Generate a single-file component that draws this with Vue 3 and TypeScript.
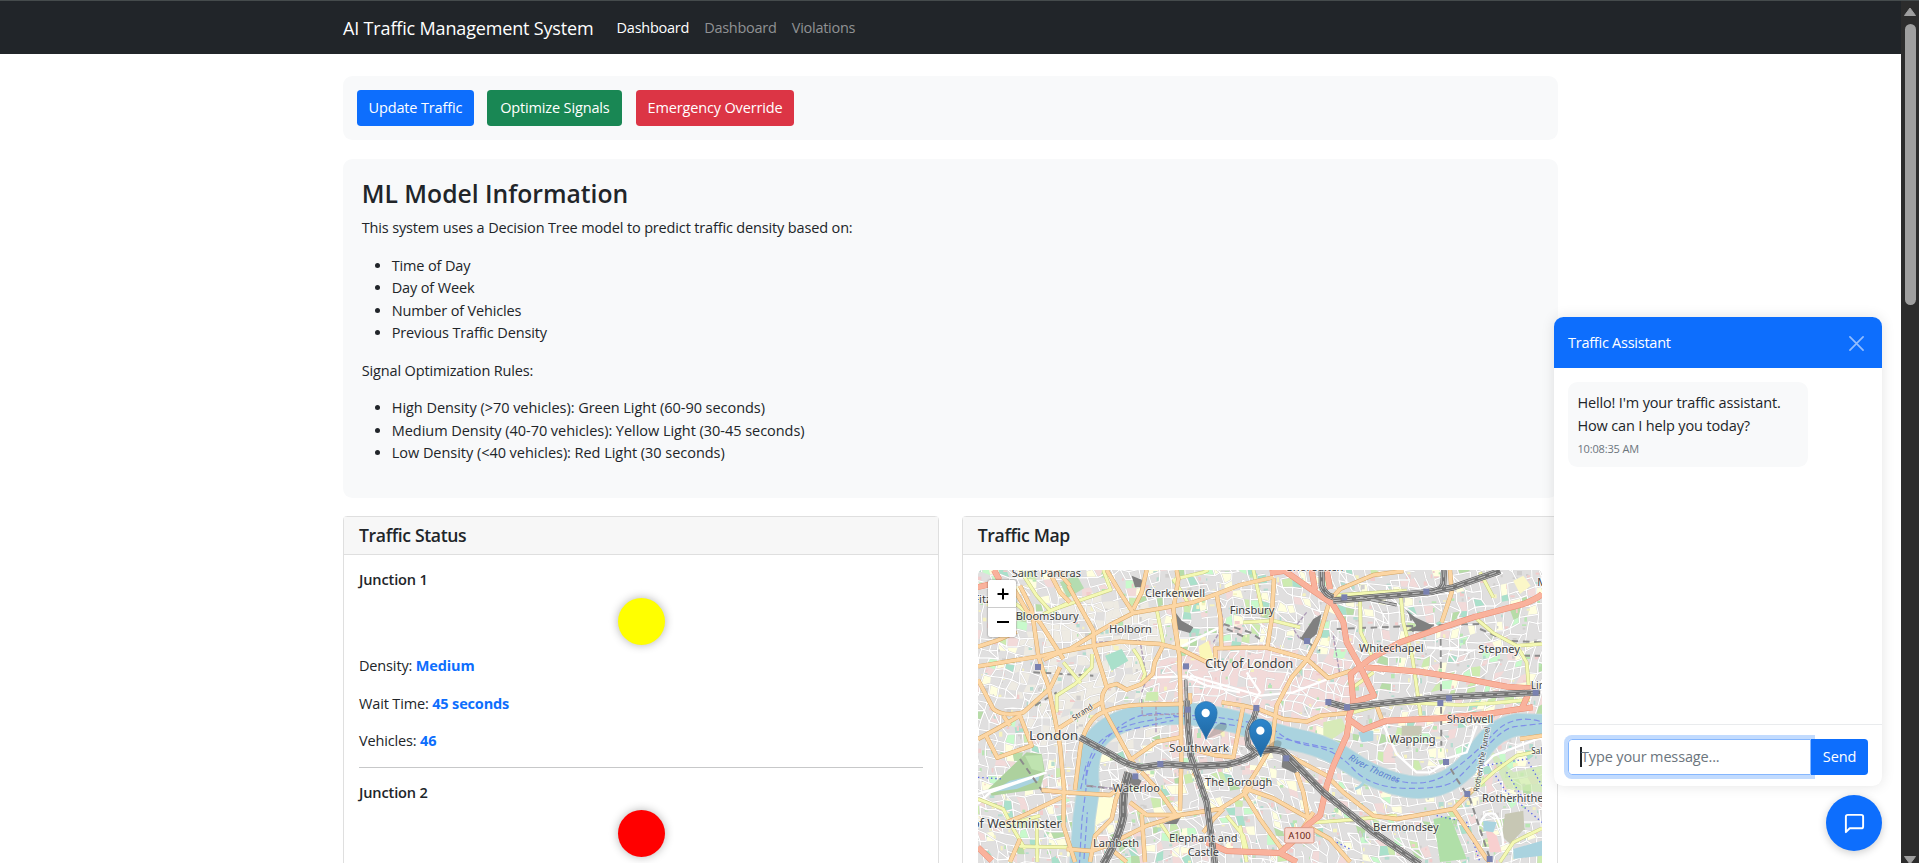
<script setup lang="ts">
interface Detail {
  label: string
  value: string
}
interface Junction {
  name: string
  signal: string
  details: Detail[]
}
interface Label {
  text: string
  x: number
  y: number
  w: number
  big?: boolean
}

const factors: string[] = ['Time of Day', 'Day of Week', 'Number of Vehicles', 'Previous Traffic Density']
const rules: string[] = [
  'High Density (>70 vehicles): Green Light (60-90 seconds)',
  'Medium Density (40-70 vehicles): Yellow Light (30-45 seconds)',
  'Low Density (<40 vehicles): Red Light (30 seconds)',
]
const junctions: Junction[] = [
  {
    name: 'Junction 1',
    signal: 'yellow',
    details: [
      { label: 'Density:', value: 'Medium' },
      { label: 'Wait Time:', value: '45 seconds' },
      { label: 'Vehicles:', value: '46' },
    ],
  },
  { name: 'Junction 2', signal: 'red', details: [] },
]

// Deterministic generator so the side streets are stable between renders.
let seed = 1234567
const rnd = (): number => {
  seed = (seed * 1103515245 + 12345) % 2147483648
  return seed / 2147483648
}

// Side streets: a jittered lattice whose direction drifts across the map.
const step = 26
const cols = 70
const rows = 38
const nodes: number[][][] = []
for (let r = 0; r < rows; r++) {
  const line: number[][] = []
  for (let c = 0; c < cols; c++) {
    const bx = 10 + c * step
    const by = r * step
    line.push([
      Math.round(bx + 34 * Math.sin(by / 120) + (rnd() - 0.5) * 13),
      Math.round(by + 36 * Math.sin(bx / 170) + (rnd() - 0.5) * 13),
    ])
  }
  nodes.push(line)
}
let streetPath = ''
const blocks: { d: string; fill: string }[] = []
const greens = ['#cdebb0', '#c8facc', '#b7dca8', '#aae0cb']
const inEllipse = (p: number[], x: number, y: number, rx: number, ry: number): boolean =>
  Math.hypot((p[0] - x) / rx, (p[1] - y) / ry) < 1
for (let r = 0; r < rows - 1; r++) {
  for (let c = 0; c < cols - 1; c++) {
    const a = nodes[r][c]
    const b = nodes[r][c + 1]
    const e = nodes[r + 1][c]
    const f = nodes[r + 1][c + 1]
    if (rnd() < 0.66) streetPath += `M${a[0]} ${a[1]}L${b[0]} ${b[1]}`
    if (rnd() < 0.66) streetPath += `M${a[0]} ${a[1]}L${e[0]} ${e[1]}`
    if (rnd() < 0.08) streetPath += `M${a[0]} ${a[1]}L${f[0]} ${f[1]}`
    const k = rnd()
    let fill = ''
    if (inEllipse(a, 870, 370, 340, 125) && k < 0.85) fill = '#f2dad9'
    else if (inEllipse(a, 400, 340, 260, 240) && k < 0.6) fill = '#eeebe3'
    else if (inEllipse(a, 760, 540, 160, 60) && k < 0.6) fill = '#f2dad9'
    else if (k < 0.08) fill = '#f2dad9'
    else if (k < 0.17) fill = '#ffffe0'
    else if (k < 0.3) fill = greens[Math.floor(rnd() * 4)]
    if (fill) blocks.push({ d: `M${a[0]} ${a[1]}L${b[0]} ${b[1]}L${f[0]} ${f[1]}L${e[0]} ${e[1]}Z`, fill })
  }
}
const specks: { x: number; y: number; w: number; h: number; fill: string }[] = []
for (let i = 0; i < 1100; i++) {
  specks.push({
    x: Math.round(54 + rnd() * 1690),
    y: Math.round(33 + rnd() * 876),
    w: Math.round(4 + rnd() * 11),
    h: Math.round(4 + rnd() * 11),
    fill: ['#b9e6b4', '#f6f3c0', '#d0cecd', '#f2cccb', '#b5dcd0'][Math.floor(rnd() * 5)],
  })
}

const river =
  'M362 920L372 780L385 690Q375 590 410 540Q450 490 540 472Q600 462 660 463Q740 466 840 492Q940 530 1040 550Q1110 568 1170 610Q1250 665 1340 682Q1420 695 1480 655Q1530 620 1570 560Q1610 508 1670 497L1760 500'
const ferry =
  'M358 920L366 780L378 690Q372 600 420 548Q470 502 560 486T700 470T840 485T960 525T1060 562T1180 630T1340 688T1480 668T1570 575T1670 502L1760 492M372 900L382 760M362 690L380 610M380 650Q390 580 470 510T660 475M470 520L640 484M700 480L860 505M950 535L1120 570M1300 662Q1400 690 1470 640T1600 525T1750 490'

const yellow: string[] = [
  'M180 33L230 110L270 155L400 110L452 92L430 33',
  'M250 165L330 130M150 120L205 165',
  'M290 460L290 410L345 375L395 325L397 285M310 310L362 372',
  'M590 150L610 252M645 60L730 40L745 33M520 270L540 300L555 345L545 370M640 60L690 140',
  'M54 720L130 750L160 810L195 870M180 862L330 865M230 780L232 909M135 800L240 770',
  'M880 33L895 100L910 170M850 190L940 185L1020 205',
  'M1200 110L1202 220L1240 300M1320 90L1330 190L1358 300L1382 470',
  'M1180 460L1270 435L1370 432L1500 438L1600 432L1710 422',
  'M1560 40L1600 115M1550 180L1600 222L1670 260L1746 255M1670 260L1700 310L1706 380',
  'M1040 792L1140 785L1310 770M1746 575L1670 590L1600 640L1520 712',
  'M1746 808L1700 830L1660 850L1620 909M1180 385L1240 340M1110 110L1340 95',
  'M800 770L850 830L860 870M840 800L860 909M600 790L640 850',
]
const orange: string[] = [
  'M54 322L250 290L330 270L395 230L450 198L520 162L620 145L700 130L770 105L840 78L940 55',
  'M54 263L110 245L170 218M250 302L300 280L390 262L480 248L600 255L660 270L745 312',
  'M150 70L200 155L240 190L310 300M180 80L215 150L235 290L250 340L268 390',
  'M325 80L400 215L402 262L430 350L440 385Q418 410 430 450L512 600L540 640',
  'M330 130L300 100L265 33M440 33L480 100L520 162M520 150L545 100L560 33',
  'M440 383L470 375L500 392L545 375L578 345L584 310L608 262',
  'M290 512L335 483L425 430M345 692L358 590Q365 510 410 470Q460 438 560 437L660 435',
  'M54 362L100 450Q130 475 190 460L270 388L300 325',
  'M54 540L110 510L180 470L215 560L112 596L78 530M130 470L150 500',
  'M266 388L285 480L300 560L312 690L310 800L345 909',
  'M245 693L310 700L450 708L475 690M305 715L200 765L130 795M320 870L395 876',
  'M515 600L590 548L662 535M640 180L658 290L662 420L664 600L660 755',
  'M662 435L690 430L690 403M850 440L820 595L762 588L702 572M785 430L850 440L900 452L970 480L1040 488L1080 470L1165 462',
  'M505 640L468 720L455 780L405 830L390 909M545 640L600 700L650 770',
  'M510 730L560 768L660 768L780 750L860 700L880 670M480 840L560 800L660 770M545 765L555 909M730 820L760 780L790 750',
  'M650 33L655 60L640 150L655 270M770 105L782 180L784 268M770 320L765 268L840 266L920 266L1040 300L1105 357L1175 335',
  'M942 58L935 180L922 265M1105 138L1078 230L1042 300L995 355L950 440L935 560L900 620L850 700',
  'M1105 130L1140 90L1240 48L1330 36M1470 33L1475 100L1445 190',
  'M905 560L960 575L1100 650L1150 700L1240 770L1310 780L1480 750L1540 690M1480 750L1580 900L1590 909',
  'M860 690L940 718L1050 780M1010 640L1030 700L1045 782M850 700L900 780L965 870L1000 850L1060 760',
  'M1250 440L1265 480M1680 540L1746 530M1040 800L1110 840L1170 909',
  'M180 840L150 909M395 876L440 860L500 909M700 650L720 620M330 80L290 33',
]
const red: string[] = [
  'M970 33L1055 92L1118 135L1150 190L1160 250L1200 322L1242 410L1180 430M1055 33L1065 92',
  'M1100 33L1110 90M930 42L970 36',
  'M1746 105Q1730 120 1690 135L1540 175L1440 208L1320 250L1230 300L1172 345L1180 430L1165 480L1210 512L1280 485L1440 478L1580 465L1680 450L1718 445',
  'M1215 325L1380 338L1520 360L1640 383L1712 388L1685 450',
  'M1168 482L1160 530L1120 620L1100 680L1080 770L1040 800L990 855L960 882',
  'M740 850L800 876L960 882L1010 909M54 865L95 905M50 85L125 68M102 33L118 62',
]
const rail: { d: string; w: number }[] = [
  { d: 'M360 535L460 590Q500 618 545 625L620 615L700 622L800 617Q860 605 890 580Q930 565 970 578L1090 700L1240 820L1380 915', w: 20 },
  { d: 'M680 425L684 500L692 590L740 730L765 915', w: 19 },
  { d: 'M677 362L680 430', w: 10 },
  { d: 'M505 640Q486 700 490 770Q480 830 430 915', w: 24 },
  { d: 'M890 450L880 480Q855 520 865 560L895 585', w: 17 },
  { d: 'M1105 430L1160 445L1290 430L1440 415L1740 400', w: 19 },
  { d: 'M1120 125L1180 120L1400 100L1480 85L1620 36', w: 19 },
  { d: 'M1085 33L1085 80Q1095 108 1120 115M1452 33L1450 75Q1440 100 1400 100', w: 18 },
  { d: 'M1200 115L1310 138', w: 9 },
]
const yards: string[] = [
  'M1060 180L1085 165L1070 225L1040 250L1022 238Z',
  'M500 640L545 665L535 685L490 670Z',
  'M628 135L665 185L700 205L690 222L655 212Z',
  'M515 50L545 62L550 85L525 85Z',
  'M1335 150L1365 175L1420 200L1400 218L1340 215L1370 200Z',
  'M610 795L665 770L650 795Z',
  'M970 570L1010 600L1010 645L965 625Z',
]
const tunnels =
  'M790 195L870 220L900 240M800 210L850 232M1020 235L1080 275M1130 210L1380 200L1560 195M1442 240L1444 560M1455 600L1490 660L1530 720L1590 900M1560 210L1640 245L1746 250M220 340L400 350M225 440L290 400M1350 165L1360 220M180 600L250 700M380 680L470 690M1690 290L1740 290'
const stations: number[][] = [
  [234, 324], [678, 322], [684, 452], [889, 447], [601, 615], [526, 652], [1041, 246], [1153, 115], [1399, 98],
  [1105, 429], [1161, 445], [1441, 432], [1467, 418], [1727, 401], [979, 598], [1458, 609], [1522, 705], [1589, 900],
]
const labels: Label[] = [
  { text: 'Saint Pancras', x: 155, y: 55, w: 208 },
  { text: 'Fitzrovia', x: 40, y: 132, w: 130 },
  { text: 'Bloomsbury', x: 167, y: 184, w: 189 },
  { text: 'Clerkenwell', x: 555, y: 113, w: 180 },
  { text: 'Holborn', x: 447, y: 222, w: 129 },
  { text: 'Finsbury', x: 809, y: 165, w: 134 },
  { text: 'Shoreditch', x: 980, y: 37, w: 170 },
  { text: 'City of London', x: 735, y: 328, w: 265, big: true },
  { text: 'London', x: 207, y: 544, w: 148, big: true },
  { text: 'Southwark', x: 627, y: 578, w: 180 },
  { text: 'The Borough', x: 735, y: 680, w: 202 },
  { text: 'Waterloo', x: 458, y: 698, w: 142 },
  { text: 'Lambeth', x: 399, y: 865, w: 138 },
  { text: 'Elephant and', x: 627, y: 848, w: 206 },
  { text: 'Castle', x: 683, y: 892, w: 94 },
  { text: 'of Westminster', x: 36, y: 808, w: 269, big: true },
  { text: 'Whitechapel', x: 1197, y: 279, w: 194 },
  { text: 'Stepney', x: 1555, y: 281, w: 125 },
  { text: 'Shadwell', x: 1460, y: 491, w: 140 },
  { text: 'Wapping', x: 1288, y: 551, w: 139 },
  { text: 'Rotherhithe', x: 1566, y: 730, w: 184 },
  { text: 'Bermondsey', x: 1239, y: 817, w: 197 },
  { text: 'Limehouse', x: 1712, y: 389, w: 160 },
  { text: 'Mile End', x: 1732, y: 80, w: 130 },
]
const pins: number[][] = [
  [738, 541],
  [902, 594],
]
</script>

<template>
  <div class="page">
    <div class="view">
      <nav class="navbar">
        <div class="container nav-row">
          <a class="brand">AI Traffic Management System</a>
          <a class="nav-link active">Dashboard</a>
          <a class="nav-link">Dashboard</a>
          <a class="nav-link">Violations</a>
        </div>
      </nav>

      <main class="container">
        <section class="controls">
          <button class="btn primary">Update Traffic</button>
          <button class="btn success">Optimize Signals</button>
          <button class="btn danger">Emergency Override</button>
        </section>

        <section class="info">
          <h3>ML Model Information</h3>
          <p>This system uses a Decision Tree model to predict traffic density based on:</p>
          <ul>
            <li v-for="f in factors" :key="f">{{ f }}</li>
          </ul>
          <p>Signal Optimization Rules:</p>
          <ul class="rules">
            <li v-for="r in rules" :key="r">{{ r }}</li>
          </ul>
        </section>

        <div class="row">
          <section class="card">
            <header class="card-header">Traffic Status</header>
            <div class="card-body">
              <div v-for="j in junctions" :key="j.name" class="junction">
                <h6>{{ j.name }}</h6>
                <div class="signal" :class="j.signal"></div>
                <p v-for="d in j.details" :key="d.label">{{ d.label }} <b>{{ d.value }}</b></p>
                <hr />
              </div>
            </div>
          </section>

          <section class="card">
            <header class="card-header">Traffic Map</header>
            <div class="card-body">
              <div class="map">
                <svg class="tiles" viewBox="54 33 1692 879">
                  <defs>
                    <linearGradient id="pin" x1="0" y1="0" x2="0" y2="1">
                      <stop offset="0" stop-color="#2e87cd" />
                      <stop offset="1" stop-color="#2068a3" />
                    </linearGradient>
                  </defs>
                  <rect x="0" y="0" width="1800" height="1000" fill="#e0dfdf" />
                  <path v-for="(b, i) in blocks" :key="'b' + i" :d="b.d" :fill="b.fill" />
                  <rect v-for="(s, i) in specks" :key="'s' + i" :x="s.x" :y="s.y" :width="s.w" :height="s.h" :fill="s.fill" />
                  <path :d="streetPath" fill="none" stroke="#cbc9c9" stroke-width="5.4" />
                  <path :d="streetPath" fill="none" stroke="#fff" stroke-width="3.8" />

                  <path d="M85 690L200 580L245 585L255 640L240 690L95 710Z" fill="#add19e" />
                  <path d="M95 700L150 665L240 645L235 665L170 690Z" fill="#aad3df" />
                  <path d="M195 590L245 588L252 640L215 630Z" fill="#bfe3b0" />
                  <path d="M435 290L485 270L505 305L455 335Z" fill="#aae0cb" />
                  <path d="M300 70L350 48L372 88L322 118Z" fill="#b4dcb0" />
                  <path d="M716 262L745 245L762 300L720 300Z" fill="#fbf7b8" />
                  <path d="M560 400L595 398L595 425L555 425Z" fill="#cdebb0" />
                  <path d="M410 715L462 715L450 775L405 800Z" fill="#ffffd8" />
                  <path d="M1090 490L1145 478L1160 510L1110 545L1090 530Z" fill="#d7eab8" />
                  <path d="M1420 780L1470 770L1520 900L1440 909L1430 840Z" fill="#b0dfa8" />
                  <path d="M1635 765L1690 755L1693 810L1650 855L1625 830Z" fill="#c7c7b4" />
                  <path d="M1575 800L1610 830L1625 880L1590 880Z" fill="#f8cfcf" />
                  <path d="M1660 870L1746 845L1746 890L1660 900Z" fill="#aad3df" />
                  <path d="M1570 785L1610 790L1600 820L1570 815ZM1195 520L1240 515L1240 545L1205 550Z" fill="#aad3df" />
                  <path d="M1325 500L1385 500L1385 530L1325 530Z" fill="#c7c7b4" />
                  <path d="M1660 65L1690 50L1712 80L1680 105Z" fill="#fbf7c8" />
                  <path d="M1580 560L1660 640L1746 620L1746 700L1640 690Z" fill="#cdebb0" opacity=".7" />

                  <path :d="river" class="river-bank" />
                  <path :d="river" class="river" />
                  <path :d="ferry" class="ferry" />
                  <path d="M1185 690Q1215 680 1215 650L1250 640" fill="none" stroke="#aad3df" stroke-width="8" />

                  <path d="M1265 485L1285 530L1310 585L1370 640L1410 640L1452 615M1455 600L1520 580L1550 500M54 735L90 700L260 640L54 705M1560 800Q1570 755 1605 765Q1625 790 1630 860M1550 640L1600 590L1746 535M580 355L680 352L740 380L840 400M690 350L760 370L900 410L1000 400L1130 350M860 340L900 400L880 430M665 262L790 200M1442 240L1442 300M1400 265L1540 275" class="minor" />
                  <path :d="tunnels" class="tunnel" />
                  <path v-for="y in yards" :key="y" :d="y" fill="#808080" />
                  <path d="M1570 620L1700 600L1746 680M1600 640L1640 700L1746 790M1430 770L1520 790L1560 909M1130 850L1170 870M54 655L130 660M1640 640L1690 720" class="boundary" />
                  <path d="M545 420L547 470L690 462M588 440L588 520M400 250L540 245L560 360L545 400M780 130L790 200L760 250M1040 160L1000 210L1020 240M1120 230L1140 350M380 680L470 690" class="admin" />

                  <g fill="none" stroke-linejoin="round">
                    <path v-for="d in yellow" :key="d" :d="d" stroke="#c3c77c" stroke-width="11" />
                    <path v-for="d in yellow" :key="'f' + d" :d="d" stroke="#f4f9b4" stroke-width="8.5" />
                    <path v-for="d in orange" :key="d" :d="d" stroke="#d3a463" stroke-width="13" />
                    <path v-for="d in orange" :key="'f' + d" :d="d" stroke="#fcd6a4" stroke-width="10.5" />
                    <path v-for="d in red" :key="d" :d="d" stroke="#e98a70" stroke-width="18" />
                    <path v-for="d in red" :key="'f' + d" :d="d" stroke="#f9b29c" stroke-width="15.5" />
                    <path v-for="l in rail" :key="l.d" :d="l.d" stroke="#5f5f5f" :stroke-width="l.w" />
                    <path v-for="l in rail" :key="'a' + l.d" :d="l.d" stroke="#cfcfcf" :stroke-width="l.w - 4" />
                    <path v-for="l in rail" :key="'b' + l.d" :d="l.d" stroke="#747474" :stroke-width="l.w - 7.5" />
                    <path v-for="l in rail" :key="'c' + l.d" :d="l.d" stroke="#c4c4c4" stroke-width="3" stroke-dasharray="22 12" />
                  </g>

                  <rect v-for="(s, i) in stations" :key="'st' + i" :x="s[0] - 9" :y="s[1] - 9" width="18" height="18" fill="#7981b0" />

                  <g class="labels">
                    <text v-for="l in labels" :key="l.text" :x="l.x" :y="l.y" :textLength="l.w" lengthAdjust="spacingAndGlyphs" :font-size="l.big ? 38 : 32">{{ l.text }}</text>
                    <text x="0" y="0" transform="translate(343 485) rotate(-34)" textLength="68" lengthAdjust="spacingAndGlyphs" font-size="23">Strand</text>
                    <text x="0" y="0" transform="translate(1556 700) rotate(-80)" textLength="198" lengthAdjust="spacingAndGlyphs" font-size="24">Rotherhithe Tunnel</text>
                    <text x="1714" y="585" font-size="24">Salter Road</text>
                  </g>
                  <path id="thames" d="M1164 600Q1240 650 1340 680" fill="none" />
                  <text class="thames"><textPath href="#thames" textLength="168">River Thames</textPath></text>
                  <rect x="974" y="806" width="88" height="46" rx="5" fill="#f7d6cd" stroke="#dc9b8a" stroke-width="3" />
                  <text x="985" y="839" textLength="67" lengthAdjust="spacingAndGlyphs" font-size="27" class="shield">A100</text>

                  <g v-for="p in pins" :key="p[0]" :transform="`translate(${p[0]} ${p[1]})`">
                    <path d="M0 0L28 -38Q48 -58 62 -46Q66 -30 44 -18Z" fill="#000" opacity=".18" />
                    <path d="M0 0C-6 -22 -33 -50 -33 -79C-33 -98 -19 -113 0 -113C19 -113 33 -98 33 -79C33 -50 6 -22 0 0Z" fill="url(#pin)" stroke="#2671ad" stroke-width="2.5" />
                    <circle cx="-1" cy="-79" r="12.5" fill="#fff" />
                  </g>
                </svg>
                <div class="zoom">
                  <a><svg viewBox="0 0 12 12"><path d="M6 .5V11.5M.5 6H11.5" /></svg></a>
                  <a><svg viewBox="0 0 12 12"><path d="M0 6H12" /></svg></a>
                </div>
              </div>
            </div>
          </section>
        </div>
      </main>

      <aside class="chat">
        <header class="chat-header">
          <span>Traffic Assistant</span>
          <svg class="close" viewBox="0 0 16 16"><path d="M1 1L15 15M15 1L1 15" /></svg>
        </header>
        <div class="chat-body">
          <div class="message">
            <div>Hello! I'm your traffic assistant.<br />How can I help you today?</div>
            <small>10:08:35 AM</small>
          </div>
        </div>
        <footer class="chat-footer">
          <div class="field"><i class="caret"></i><span>Type your message...</span></div>
          <button class="send">Send</button>
        </footer>
      </aside>
      <button class="chat-toggle">
        <svg viewBox="0 0 24 24"><path d="M21 15a2 2 0 0 1-2 2H7l-4 4V5a2 2 0 0 1 2-2h14a2 2 0 0 1 2 2z" /></svg>
      </button>
    </div>

    <div class="scrollbar">
      <svg class="arrow" viewBox="0 0 14 10"><path d="M7 1L12.5 8.5H1.5Z" /></svg>
      <div class="thumb"></div>
      <svg class="arrow down" viewBox="0 0 14 10"><path d="M7 9L1.5 1.5H12.5Z" /></svg>
    </div>
  </div>
</template>

<style>
body {
  margin: 0;
  overflow: hidden;
}
</style>

<style scoped>
* {
  box-sizing: border-box;
}
.page {
  display: flex;
  height: 863px;
  overflow: hidden;
  border-top: 1px solid #454b4c;
  background: #fff;
  color: #212529;
  font-family: 'Open Sans', 'Noto Sans', sans-serif;
  font-size: 14.5px;
  letter-spacing: -0.15px;
  line-height: 22.5px;
}
.view {
  position: relative;
  width: 1901px;
  height: 862px;
  overflow: hidden;
}
.container {
  width: 1215px;
  margin: 0 auto;
}
.navbar {
  height: 53px;
  background: #212529;
}
.nav-row {
  display: flex;
  align-items: center;
  height: 53px;
  padding-top: 2px;
}
.brand {
  width: 250px;
  margin-right: 16px;
  color: #fff;
  font-size: 18px;
  letter-spacing: -0.16px;
  white-space: nowrap;
}
.nav-link {
  padding: 0 7.6px;
  color: #909294;
  letter-spacing: -0.27px;
}
.nav-link.active {
  color: #fff;
}
.controls {
  display: flex;
  gap: 13.6px;
  margin-top: 22px;
  padding: 14px;
  border-radius: 9.4px;
  background: #f8f9fa;
}
.btn,
.send {
  height: 36px;
  padding: 1px 0 0;
  border: 0;
  border-radius: 3.75px;
  color: #fff;
  font: inherit;
  letter-spacing: inherit;
}
.primary {
  width: 116.8px;
  background: #0d6efd;
}
.success {
  width: 135px;
  background: #198754;
}
.danger {
  width: 158px;
  background: #dc3545;
}
.info {
  height: 339px;
  margin-top: 18.5px;
  padding: 19.5px 18.75px 0;
  border-radius: 9.4px;
  background: #f8f9fa;
}
h3 {
  margin: 0 0 7.5px;
  font-size: 24.7px;
  font-weight: 600;
  line-height: 31.5px;
  letter-spacing: 0;
}
p {
  margin: 0 0 15px;
}
ul {
  margin: 0 0 15px;
  padding-left: 30px;
}
.rules {
  letter-spacing: -0.04px;
}
.row {
  display: grid;
  grid-template-columns: 1fr 1fr;
  gap: 22.5px;
  margin-top: 18.25px;
}
.card {
  height: 500px;
  border: 1px solid #dfdfdf;
  border-radius: 3.75px;
  background: #fff;
}
.card-header {
  padding: 7.5px 15px;
  border-bottom: 1px solid #dfdfdf;
  background: #f7f7f7;
  font-size: 17.6px;
  font-weight: 600;
  letter-spacing: -0.35px;
}
.card-body {
  padding: 15px;
}
h6 {
  margin: 0;
  font-size: 14.6px;
  font-weight: 600;
  line-height: 18px;
}
.junction p {
  position: relative;
  top: 1px;
}
.signal {
  width: 47px;
  height: 47px;
  margin: 9.4px auto;
  border-radius: 50%;
  box-shadow: 0 0 9.4px rgba(0, 0, 0, 0.3);
}
.yellow {
  background: #ff0;
}
.red {
  background: #f00;
}
b {
  color: #0d6efd;
  font-weight: 700;
}
hr {
  height: 1px;
  margin: 0 0 15px;
  border: 0;
  background: #c7c8c9;
}
.map {
  position: relative;
  height: 375px;
  overflow: hidden;
  border-radius: 4.7px;
}
.tiles {
  display: block;
  width: 564px;
  height: 293px;
}
.river-bank,
.river,
.ferry,
.minor,
.tunnel,
.boundary,
.admin {
  fill: none;
}
.river-bank {
  stroke: #c3d9dd;
  stroke-width: 70;
}
.river {
  stroke: #aad3df;
  stroke-width: 64;
}
.ferry {
  stroke: #7f8fe8;
  stroke-width: 3.5;
  stroke-dasharray: 18 9;
}
.minor {
  stroke: #fff;
  stroke-width: 7;
}
.tunnel {
  stroke: #8c8c8c;
  stroke-width: 6;
  stroke-dasharray: 20 14;
}
.boundary {
  stroke: #5560e8;
  stroke-width: 4;
  stroke-dasharray: 4 9;
}
.admin {
  stroke: #ac9ab6;
  stroke-width: 4;
  stroke-dasharray: 12 5;
}
.labels text {
  fill: #404040;
  stroke: rgba(255, 255, 255, 0.7);
  stroke-width: 5px;
  paint-order: stroke;
  font-family: 'Noto Sans', sans-serif;
  letter-spacing: 0;
}
.thames {
  fill: #5b7fd0;
  font: italic 27px 'Noto Sans', sans-serif;
}
.shield {
  fill: #6a2414;
  font-family: 'Noto Sans', sans-serif;
}
.zoom {
  position: absolute;
  top: 10px;
  left: 10px;
  width: 28px;
  height: 57px;
  border-radius: 2px;
  background: #fff;
  box-shadow: 0 0 2px rgba(0, 0, 0, 0.55);
}
.zoom a {
  display: flex;
  align-items: center;
  justify-content: center;
  height: 28px;
}
.zoom a:first-child {
  border-bottom: 1px solid #ccc;
}
.zoom svg {
  width: 12px;
  height: 12px;
  margin-left: 2px;
  fill: none;
  stroke: #000;
  stroke-width: 2;
}
.chat {
  position: absolute;
  top: 316px;
  left: 1554px;
  display: flex;
  flex-direction: column;
  width: 328px;
  height: 469px;
  overflow: hidden;
  border-radius: 9.4px;
  background: #fff;
  box-shadow: 0 0 14px rgba(0, 0, 0, 0.11);
}
.chat-header {
  display: flex;
  align-items: center;
  justify-content: space-between;
  height: 51px;
  padding: 1px 18px 0 14px;
  background: #0d6efd;
  color: #fff;
  letter-spacing: -0.25px;
}
.close {
  width: 15px;
  height: 15px;
  fill: none;
  stroke: #fff;
  stroke-width: 1.8;
  stroke-linecap: round;
  opacity: 0.55;
}
.chat-body {
  flex: 1;
  padding: 14px;
}
.message {
  width: 240px;
  height: 85px;
  padding: 10px 9.4px 0;
  border-radius: 9.4px;
  background: #f8f9fa;
}
.message small {
  display: block;
  margin-top: 3px;
  color: #6c757d;
  font-size: 11px;
  line-height: 18px;
}
.chat-footer {
  display: flex;
  height: 62px;
  padding: 14px;
  border-top: 1px solid #e9ebed;
}
.field {
  display: flex;
  align-items: center;
  width: 243px;
  height: 36px;
  padding-left: 11px;
  border: 1px solid #86b7fe;
  border-radius: 3.75px 0 0 3.75px;
  box-shadow: 0 0 0 4px rgba(13, 110, 253, 0.25);
  color: #6c757d;
}
.caret {
  width: 2px;
  height: 20px;
  margin-right: -1px;
  background: #212529;
}
.send {
  position: relative;
  width: 57px;
  border-radius: 0 3.75px 3.75px 0;
  background: #0d6efd;
}
.chat-toggle {
  position: absolute;
  top: 794px;
  left: 1826px;
  display: grid;
  place-items: center;
  width: 56px;
  height: 56px;
  padding: 0;
  border: 0;
  border-radius: 50%;
  background: #0d6efd;
  box-shadow: 0 2px 8px rgba(0, 0, 0, 0.2);
}
.chat-toggle svg {
  width: 23px;
  height: 23px;
  fill: none;
  stroke: #fff;
  stroke-width: 2;
  stroke-linecap: round;
  stroke-linejoin: round;
}
.scrollbar {
  display: flex;
  flex-direction: column;
  align-items: center;
  width: 18px;
  height: 862px;
  padding-top: 6px;
  background: #2c2c2c;
}
.arrow {
  width: 14px;
  height: 10px;
  fill: #9f9f9f;
  stroke: #9f9f9f;
  stroke-linejoin: round;
}
.thumb {
  width: 11px;
  height: 281px;
  margin-top: 7px;
  border-radius: 6px;
  background: #9f9f9f;
}
.down {
  margin-top: auto;
  margin-bottom: -2px;
}
</style>
